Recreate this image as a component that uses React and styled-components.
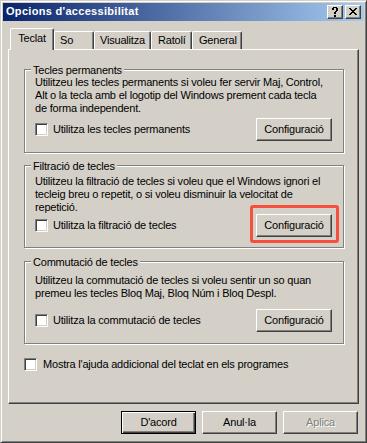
import React from 'react';
import styled, { createGlobalStyle } from 'styled-components';

const GlobalStyle = createGlobalStyle`
  html, body { margin: 0; padding: 0; background: #d4d0c8; }
  body {
    font-family: "Liberation Sans", Arial, sans-serif;
    font-size: 11px;
    color: #000;
  }
  * { box-sizing: border-box; }
`;

const Window = styled.div`
  width: 367px;
  height: 443px;
  background: #d4d0c8;
  border: 1px solid;
  border-color: #d4d0c8 #404040 #404040 #d4d0c8;
  box-shadow: inset 1px 1px #ffffff, inset -1px -1px #808080;
  padding: 2px;
  display: flex;
  flex-direction: column;
`;

const TitleBar = styled.div`
  flex: none;
  height: 18px;
  background: linear-gradient(to right, #0a246a, #a6caf0);
  display: flex;
  align-items: center;
  padding: 0 3px;
`;

const Title = styled.div`
  flex: 1;
  align-self: flex-start;
  color: #ffffff;
  font-weight: bold;
  font-size: 11px;
  letter-spacing: 0.3px;
  line-height: 17px;
  white-space: nowrap;
`;

const CaptionButton = styled.div`
  width: 16px;
  height: 14px;
  margin-left: ${p => p.$gap || 0}px;
  background: #d4d0c8;
  border: 1px solid;
  border-color: #ffffff #404040 #404040 #ffffff;
  box-shadow: inset -1px -1px #808080;
  display: flex;
  align-items: center;
  justify-content: center;
  padding: 0 1px 1px 0;
`;

const Body = styled.div`
  flex: 1;
  display: flex;
  flex-direction: column;
  padding-top: 7px;
`;

const TabRow = styled.div`
  height: 21px;
  display: flex;
  align-items: flex-end;
  padding-left: 7px;
`;

const Tab = styled.div`
  position: relative;
  z-index: ${p => (p.$active ? 2 : 0)};
  width: ${p => p.$w}px;
  height: ${p => (p.$active ? 22 : 18)}px;
  margin-bottom: ${p => (p.$active ? -1 : 0)}px;
  background: #d4d0c8;
  border-left: 1px solid #ffffff;
  border-top: 1px solid #ffffff;
  border-right: 1px solid #404040;
  border-radius: 2px 2px 0 0;
  box-shadow: inset -1px 0 #808080;
  padding-top: ${p => (p.$active ? 3 : 2)}px;
  padding-left: ${p => p.$pl}px;
  text-align: ${p => (p.$active ? 'center' : 'left')};
  line-height: 13px;
  letter-spacing: -0.2px;
  white-space: nowrap;
`;

const Panel = styled.div`
  flex: none;
  height: 355px;
  margin: 0 5px;
  border-left: 1px solid #ffffff;
  border-top: 1px solid #ffffff;
  border-right: 1px solid #404040;
  border-bottom: 1px solid #404040;
  box-shadow: inset -1px -1px #808080;
  padding: 19px 0 0 15px;
  display: flex;
  flex-direction: column;
`;

const Group = styled.div`
  position: relative;
  width: 320px;
  height: ${p => p.$h}px;
  margin-top: ${p => p.$mt || 0}px;
  border: 1px solid #808080;
  box-shadow: inset 1px 1px #ffffff, 1px 1px #ffffff;
  padding: ${p => p.$pt}px 11px ${p => p.$pb}px 10px;
  display: flex;
  flex-direction: column;
`;

const Legend = styled.span`
  position: absolute;
  top: -6px;
  left: 6px;
  padding: 0 2px;
  background: #d4d0c8;
  line-height: 13px;
  letter-spacing: -0.2px;
  white-space: nowrap;
`;

const Description = styled.div`
  line-height: 13px;
  letter-spacing: -0.2px;
`;

const Line = styled.div`
  white-space: nowrap;
`;

const Row = styled.div`
  margin-top: auto;
  display: flex;
  align-items: center;
  justify-content: space-between;
`;

const CheckLabel = styled.label`
  display: flex;
  align-items: center;
  gap: ${p => p.$gap || 5}px;
  margin-top: ${p => p.$mt || 0}px;
  line-height: 13px;
  letter-spacing: -0.2px;
  white-space: nowrap;
`;

const CheckBox = styled.span`
  flex: none;
  width: 13px;
  height: 13px;
  background: #ffffff;
  border: 1px solid;
  border-color: #808080 #ffffff #ffffff #808080;
  box-shadow: inset 1px 1px #404040, inset -1px -1px #d4d0c8;
`;

const Button = styled.div`
  flex: none;
  width: ${p => p.$w || 75}px;
  height: 23px;
  background: #d4d0c8;
  border: 1px solid;
  border-color: ${p => (p.$default ? '#000000' : '#ffffff #404040 #404040 #ffffff')};
  box-shadow: ${p =>
    p.$default
      ? 'inset 1px 1px #ffffff, inset -1px -1px #404040, inset -2px -2px #808080'
      : 'inset -1px -1px #808080'};
  display: flex;
  align-items: center;
  justify-content: center;
  padding-bottom: 1px;
  letter-spacing: -0.2px;
  color: ${p => (p.$disabled ? '#808080' : '#000000')};
  text-shadow: ${p => (p.$disabled ? '1px 1px 0 #ffffff' : 'none')};
  white-space: nowrap;
`;

const Highlight = styled.div`
  position: relative;
  &::after {
    content: '';
    position: absolute;
    top: -9px;
    left: -6px;
    right: -7px;
    bottom: -6px;
    border: 3px solid #f4503c;
    border-radius: 3px;
    pointer-events: none;
  }
`;

const Footer = styled.div`
  flex: none;
  margin-top: 7px;
  display: flex;
  justify-content: flex-end;
  gap: 6px;
  padding-right: 6px;
`;

function PixelGlyph({ rows }) {
  const w = rows[0].length;
  const h = rows.length;
  const rects = [];
  rows.forEach((r, y) =>
    r.split('').forEach((c, x) => {
      if (c === 'X') rects.push(<rect key={`${x}-${y}`} x={x} y={y} width="1" height="1" />);
    })
  );
  return (
    <svg width={w} height={h} viewBox={`0 0 ${w} ${h}`} shapeRendering="crispEdges" fill="#000">
      {rects}
    </svg>
  );
}

const HELP = [
  '.XXXX.',
  'XX..XX',
  'XX..XX',
  '....XX',
  '...XX.',
  '..XX..',
  '..XX..',
  '......',
  '..XX..',
  '..XX..',
];

const CLOSE = [
  'XX....XX',
  '.XX..XX.',
  '..XXXX..',
  '...XX...',
  '..XXXX..',
  '.XX..XX.',
  'XX....XX',
];

const tabs = [
  { label: 'Teclat', w: 44, pl: 0, active: true },
  { label: 'So', w: 40, pl: 5 },
  { label: 'Visualitza', w: 57, pl: 5 },
  { label: 'Ratolí', w: 41, pl: 6 },
  { label: 'General', w: 50, pl: 6 },
];

const groups = [
  {
    title: 'Tecles permanents',
    lines: [
      'Utilitzeu les tecles permanents si voleu fer servir Maj, Control,',
      'Alt o la tecla amb el logotip del Windows prement cada tecla',
      'de forma independent.',
    ],
    check: 'Utilitza les tecles permanents',
    h: 84, mt: 0, pt: 6, pb: 11,
  },
  {
    title: 'Filtració de tecles',
    lines: [
      'Utilitzeu la filtració de tecles si voleu que el Windows ignori el',
      'tecleig breu o repetit, o si voleu disminuir la velocitat de',
      'repetició.',
    ],
    check: 'Utilitza la filtració de tecles',
    h: 83, mt: 12, pt: 9, pb: 10, highlight: true,
  },
  {
    title: 'Commutació de tecles',
    lines: [
      'Utilitzeu la commutació de tecles si voleu sentir un so quan',
      'premeu les tecles Bloq Maj, Bloq Núm i Bloq Despl.',
    ],
    check: 'Utilitza la commutació de tecles',
    h: 83, mt: 13, pt: 12, pb: 11,
  },
];

export default function App() {
  return (
    <>
      <GlobalStyle />
      <Window>
        <TitleBar>
          <Title>Opcions d'accessibilitat</Title>
          <CaptionButton>
            <PixelGlyph rows={HELP} />
          </CaptionButton>
          <CaptionButton $gap={2}>
            <PixelGlyph rows={CLOSE} />
          </CaptionButton>
        </TitleBar>
        <Body>
          <TabRow>
            {tabs.map(t => (
              <Tab key={t.label} $w={t.w} $pl={t.pl} $active={t.active}>
                {t.label}
              </Tab>
            ))}
          </TabRow>
          <Panel>
            {groups.map(g => {
              const button = <Button $w={76}>Configuració</Button>;
              return (
                <Group key={g.title} $h={g.h} $mt={g.mt} $pt={g.pt} $pb={g.pb}>
                  <Legend>{g.title}</Legend>
                  <Description>
                    {g.lines.map(l => (
                      <Line key={l}>{l}</Line>
                    ))}
                  </Description>
                  <Row>
                    <CheckLabel>
                      <CheckBox />
                      {g.check}
                    </CheckLabel>
                    {g.highlight ? <Highlight>{button}</Highlight> : button}
                  </Row>
                </Group>
              );
            })}
            <CheckLabel $gap={6} $mt={14}>
              <CheckBox />
              Mostra l'ajuda addicional del teclat en els programes
            </CheckLabel>
          </Panel>
          <Footer>
            <Button $default>D'acord</Button>
            <Button>Anul·la</Button>
            <Button $disabled>Aplica</Button>
          </Footer>
        </Body>
      </Window>
    </>
  );
}
